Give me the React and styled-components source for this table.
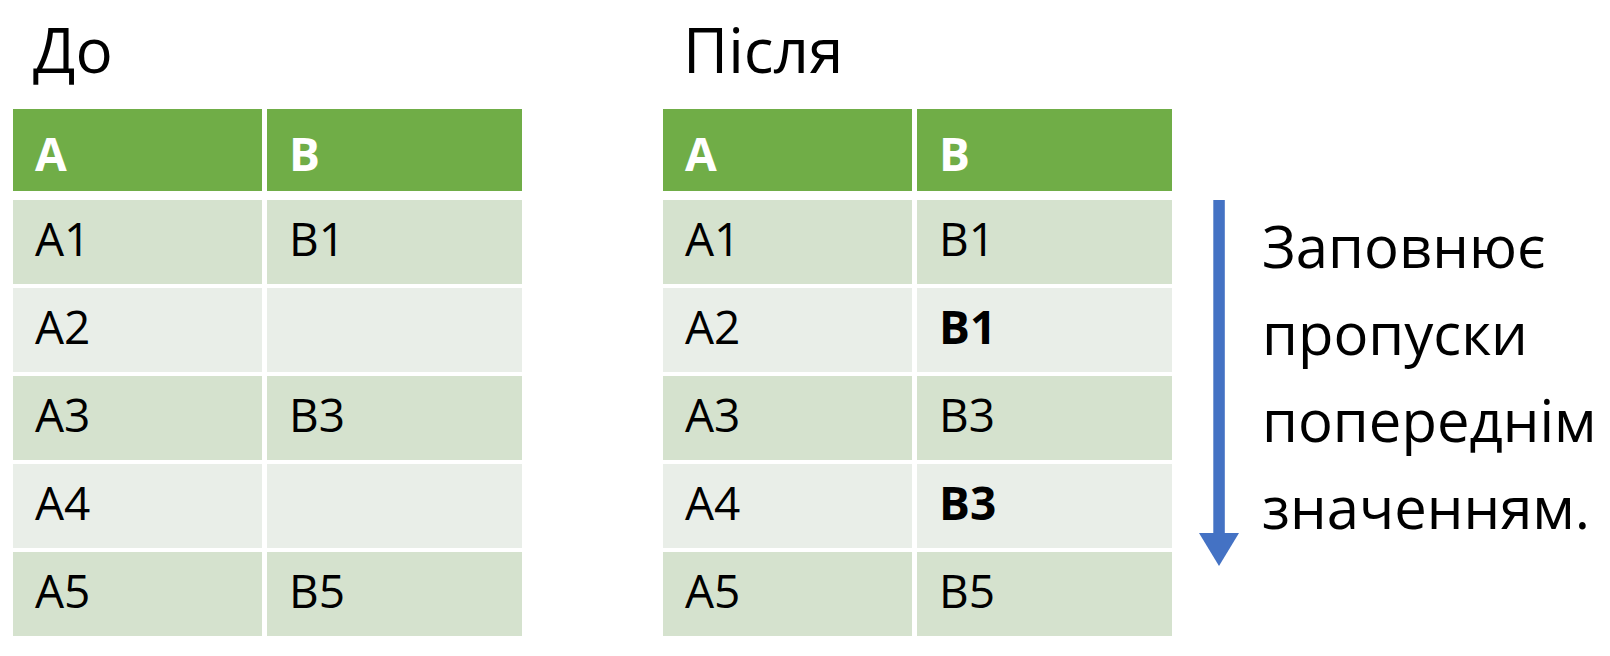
import React from "react";
import styled, { createGlobalStyle } from "styled-components";

const Global = createGlobalStyle`
  html, body { margin: 0; padding: 0; background: #ffffff; }
  body { font-family: "Open Sans", "Noto Sans", sans-serif; color: #000; }
`;

const Page = styled.div`
  display: flex;
  align-items: flex-start;
  width: 1610px;
  height: 656px;
  padding-left: 13px;
  box-sizing: border-box;
  overflow: hidden;
`;

const Block = styled.section`
  display: flex;
  flex-direction: column;
  margin-right: ${(p) => p.$gap}px;
`;

const Title = styled.h1`
  margin: 0;
  padding: 18px 0 0 20px;
  height: 62px;
  margin-bottom: 29px;
  font-size: 62px;
  line-height: 62px;
  font-weight: 400;
  color: #000;
`;

const Table = styled.div`
  display: flex;
  flex-direction: column;
  gap: 4px;
`;

const Row = styled.div`
  display: grid;
  grid-template-columns: 249px 255px;
  column-gap: 5px;
  height: ${(p) => (p.$head ? 82 : 84)}px;
  margin-bottom: ${(p) => (p.$head ? 5 : 0)}px;
`;

const HeadCell = styled.div`
  background: #70ad47;
  color: #ffffff;
  font-weight: 700;
  font-size: 46px;
  display: flex;
  align-items: center;
  padding: 6px 0 0 22px;
`;

const Cell = styled.div`
  background: ${(p) => (p.$odd ? "#d5e2ce" : "#e9eee8")};
  font-size: 46px;
  font-weight: ${(p) => (p.$bold ? 700 : 400)};
  display: flex;
  align-items: center;
  padding: 0 0 8px 22px;
`;

const Aside = styled.aside`
  display: flex;
  align-items: flex-start;
  gap: 23px;
  padding-top: 200px;
`;

const Note = styled.p`
  margin: 2px 0 0 0;
  font-size: 58px;
  line-height: 87px;
  color: #000;
`;

const Arrow = () => (
  <svg width="40" height="366" viewBox="0 0 40 366">
    <rect x="14.3" y="0" width="11.5" height="334" fill="#4472c4" />
    <polygon points="0,333 40,333 20,366" fill="#4472c4" />
  </svg>
);

const before = [
  ["A1", "B1"],
  ["A2", ""],
  ["A3", "B3"],
  ["A4", ""],
  ["A5", "B5"],
];

const after = [
  ["A1", "B1", false],
  ["A2", "B1", true],
  ["A3", "B3", false],
  ["A4", "B3", true],
  ["A5", "B5", false],
];

const DataTable = ({ rows }) => (
  <Table>
    <Row $head>
      <HeadCell>A</HeadCell>
      <HeadCell>B</HeadCell>
    </Row>
    {rows.map(([a, b, bold], i) => (
      <Row key={i}>
        <Cell $odd={i % 2 === 0}>{a}</Cell>
        <Cell $odd={i % 2 === 0} $bold={bold}>
          {b}
        </Cell>
      </Row>
    ))}
  </Table>
);

export default function App() {
  return (
    <>
      <Global />
      <Page>
        <Block $gap={141}>
          <Title>До</Title>
          <DataTable rows={before} />
        </Block>
        <Block $gap={27}>
          <Title>Після</Title>
          <DataTable rows={after} />
        </Block>
        <Aside>
          <Arrow />
          <Note>
            Заповнює
            <br />
            пропуски
            <br />
            попереднім
            <br />
            значенням.
          </Note>
        </Aside>
      </Page>
    </>
  );
}
